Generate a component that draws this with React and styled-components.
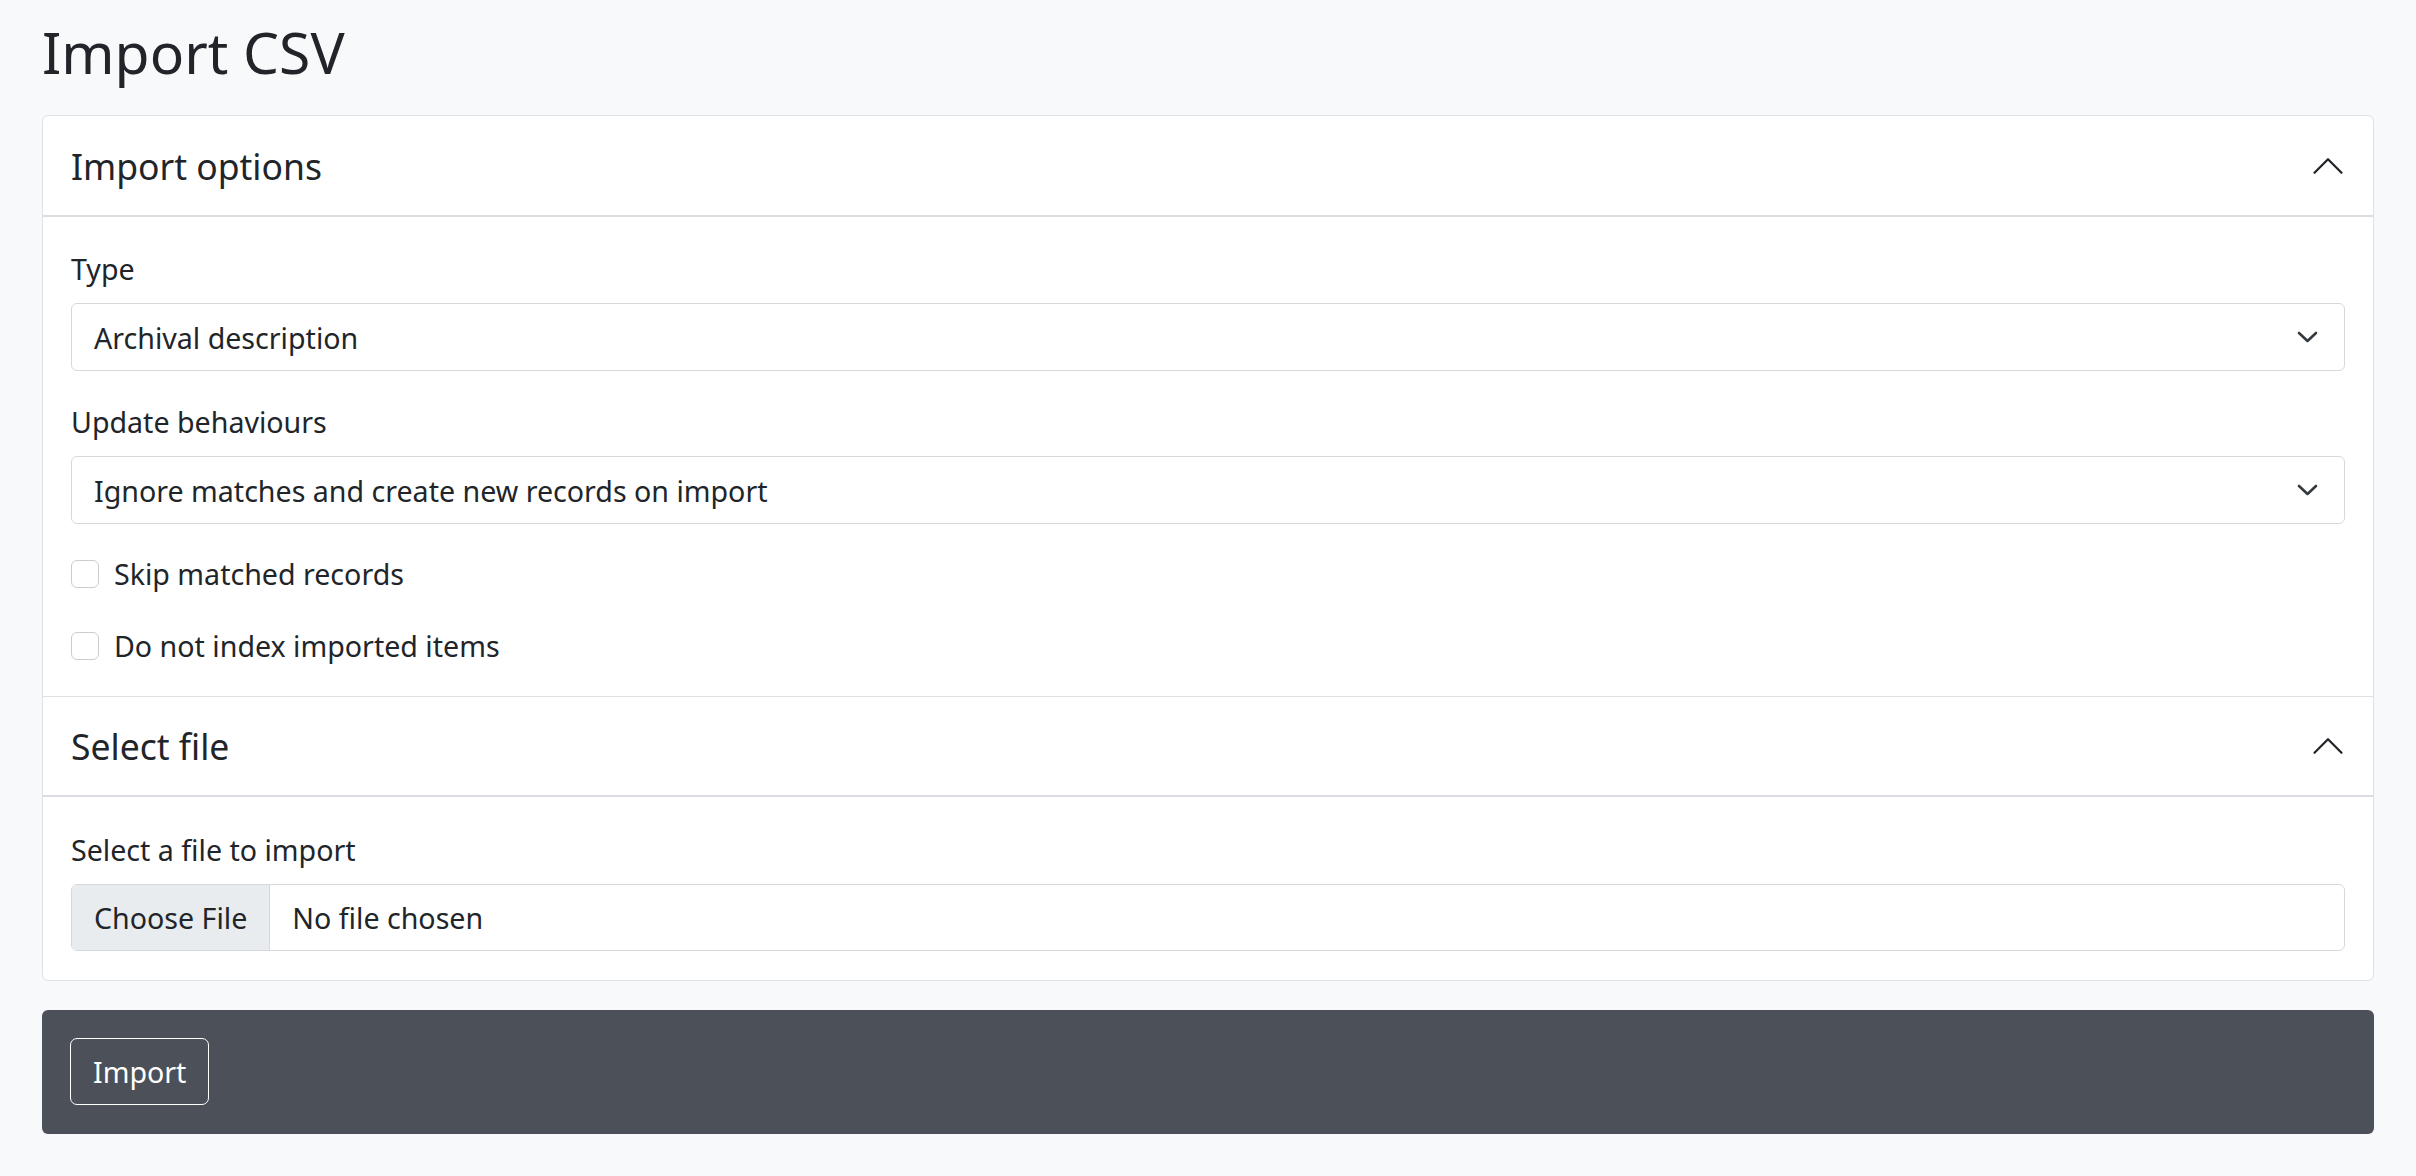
import { createGlobalStyle, styled } from "styled-components";

const GlobalStyle = createGlobalStyle`
	html, body {
		margin: 0;
		padding: 0;
		background: #f8f9fa;
	}
	body {
		min-height: 100vh;
		font-family: "Noto Sans", "Open Sans", sans-serif;
		color: #212529;
	}
	* {
		box-sizing: border-box;
	}
`;

const Page = styled.main`
	padding: 18px 42px 40px;
`;

const Title = styled.h1`
	margin: 0 0 29px;
	font-size: 57px;
	font-weight: 400;
	line-height: 1.2;
`;

const Card = styled.section`
	background: #fff;
	border: 1px solid #dee2e6;
	border-radius: 6px;
	overflow: hidden;
`;

const SectionHeader = styled.div`
	display: flex;
	align-items: center;
	justify-content: space-between;
	height: 101px;
	padding: 0 27px 0 28px;
	border-top: ${(p) => (p.$first ? "none" : "1px solid #dee2e6")};
	border-bottom: 2px solid #dadee2;
	font-size: 35.5px;
	line-height: 1.2;
`;

const SectionBody = styled.div`
	display: flex;
	flex-direction: column;
	padding: ${(p) => p.$top || 32}px 28px ${(p) => p.$bottom || 32}px;
`;

const Label = styled.label`
	display: block;
	font-size: 28.6px;
	line-height: 39px;
	margin-bottom: 15px;
`;

const Field = styled.div`
	margin-bottom: ${(p) => p.$mb ?? 31}px;
`;

const SelectBox = styled.div`
	display: flex;
	align-items: center;
	justify-content: space-between;
	height: 68px;
	padding: 0 26px 0 22px;
	border: 1px solid #d5d9dd;
	border-radius: 6px;
	font-size: 28.6px;
	background: #fff;
`;

const CheckRow = styled.label`
	display: flex;
	align-items: center;
	gap: 15px;
	font-size: 28.6px;
	line-height: 39px;
	margin-bottom: ${(p) => p.$mb ?? 0}px;
`;

const CheckBox = styled.span`
	width: 28px;
	height: 28px;
	border: 1px solid #c9cdd2;
	border-radius: 6px;
	background: #fff;
	flex: none;
`;

const FileBox = styled.div`
	display: flex;
	align-items: stretch;
	height: 67px;
	border: 1px solid #d5d9dd;
	border-radius: 6px;
	overflow: hidden;
	font-size: 28.6px;
	white-space: nowrap;
`;

const FileButton = styled.span`
	display: flex;
	align-items: center;
	flex: none;
	padding: 0 22px;
	background: #e9ecef;
	border-right: 1px solid #d5d9dd;
`;

const FileName = styled.span`
	display: flex;
	align-items: center;
	padding: 0 22px;
`;

const ActionBar = styled.div`
	margin-top: 29px;
	padding: 28px 28px 29px;
	background: #4c5058;
	border-radius: 6px;
`;

const OutlineButton = styled.button`
	display: inline-flex;
	align-items: center;
	height: 67px;
	padding: 0 22px;
	border: 1.5px solid #fff;
	border-radius: 7px;
	background: transparent;
	color: #fff;
	font-family: inherit;
	font-size: 28.6px;
`;

function AccordionChevron() {
	return (
		<svg width="36" height="36" viewBox="0 0 16 16" fill="#212529">
			<g transform="rotate(180 8 8)">
				<path d="M1.646 4.646a.5.5 0 0 1 .708 0L8 10.293l5.646-5.647a.5.5 0 0 1 .708.708l-6 6a.5.5 0 0 1-.708 0l-6-6a.5.5 0 0 1 0-.708z" />
			</g>
		</svg>
	);
}

function SelectChevron() {
	return (
		<svg width="21" height="12" viewBox="0 0 21 12" fill="none">
			<polyline
				points="2,2 10.5,10 19,2"
				stroke="#343a40"
				strokeWidth="2.6"
				strokeLinecap="round"
				strokeLinejoin="round"
			/>
		</svg>
	);
}

export default function App() {
	return (
		<>
			<GlobalStyle />
			<Page>
				<Title>Import CSV</Title>
				<Card>
					<SectionHeader $first>
						<span>Import options</span>
						<AccordionChevron />
					</SectionHeader>
					<SectionBody $bottom={31}>
						<Field>
							<Label>Type</Label>
							<SelectBox>
								<span>Archival description</span>
								<SelectChevron />
							</SelectBox>
						</Field>
						<Field $mb={30}>
							<Label>Update behaviours</Label>
							<SelectBox>
								<span>Ignore matches and create new records on import</span>
								<SelectChevron />
							</SelectBox>
						</Field>
						<CheckRow $mb={33}>
							<CheckBox />
							Skip matched records
						</CheckRow>
						<CheckRow>
							<CheckBox />
							Do not index imported items
						</CheckRow>
					</SectionBody>
					<SectionHeader>
						<span>Select file</span>
						<AccordionChevron />
					</SectionHeader>
					<SectionBody $top={33} $bottom={29}>
						<Label>Select a file to import</Label>
						<FileBox>
							<FileButton>Choose File</FileButton>
							<FileName>No file chosen</FileName>
						</FileBox>
					</SectionBody>
				</Card>
				<ActionBar>
					<OutlineButton type="button">Import</OutlineButton>
				</ActionBar>
			</Page>
		</>
	);
}
